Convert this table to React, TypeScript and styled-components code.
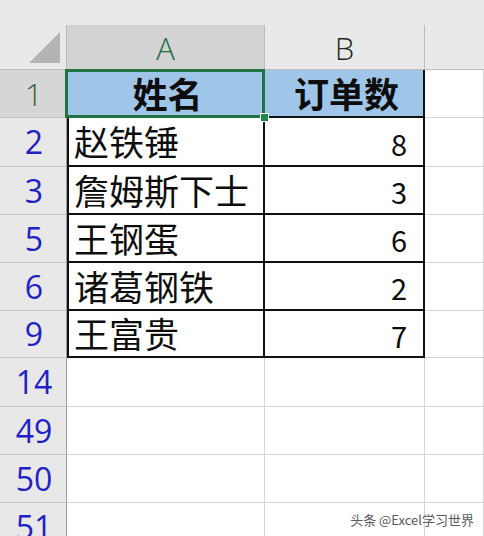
import React from "react";
import styled, { createGlobalStyle } from "styled-components";

const Global = createGlobalStyle`
  html, body { margin: 0; padding: 0; background: #ffffff; }
  * { box-sizing: border-box; }
`;

const FONT = `"Noto Sans CJK SC", "Noto Sans", sans-serif`;

const Sheet = styled.div`
  position: relative;
  width: 484px;
  height: 536px;
  overflow: hidden;
  background: #ffffff;
  font-family: ${FONT};
  display: flex;
  flex-direction: column;
`;

const TopStrip = styled.div`
  height: 25px;
  flex: none;
  background: #e9e9e9;
`;

const Row = styled.div<{ $h: number }>`
  display: grid;
  grid-template-columns: 67px 198px 160px 1fr;
  height: ${(p) => p.$h}px;
  flex: none;
`;

const Corner = styled.div`
  background: #e9e9e9;
  border-right: 1px solid #b9b9b9;
  border-bottom: 1px solid #bdbdbd;
  display: flex;
  align-items: flex-end;
  justify-content: flex-end;
  padding: 0 6px 6px 0;
`;

const ColHead = styled.div<{ $active?: boolean; $last?: boolean }>`
  background: ${(p) => (p.$active ? "#d3d3d3" : "#e9e9e9")};
  border-right: ${(p) => (p.$last ? "none" : "1px solid #bdbdbd")};
  border-bottom: 1px solid #bdbdbd;
  color: ${(p) => (p.$active ? "#1f6b40" : "#262626")};
  font-family: "Open Sans", ${FONT};
  font-size: 31px;
  font-weight: 300;
  line-height: 1;
  display: flex;
  align-items: center;
  justify-content: center;
  padding-top: 2px;
`;

const RowHead = styled.div<{ $active?: boolean }>`
  background: ${(p) => (p.$active ? "#d6d6d6" : "#e8e8e8")};
  border-right: 1px solid #9d9d9d;
  border-bottom: 1px solid #c4c4c4;
  color: ${(p) => (p.$active ? "#3b5a49" : "#2121c8")};
  font-family: "Open Sans", ${FONT};
  font-size: 32px;
  font-weight: ${(p) => (p.$active ? 300 : 400)};
  line-height: 1;
  display: flex;
  align-items: center;
  justify-content: center;
  padding-left: 2px;
`;

const Cell = styled.div<{
  $align?: "left" | "right" | "center";
  $fill?: boolean;
  $bold?: boolean;
  $boxed?: boolean;
  $leftEdge?: boolean;
}>`
  position: relative;
  background: ${(p) => (p.$fill ? "#9fc5e8" : "#ffffff")};
  border-right: ${(p) => (p.$boxed ? "2px solid #111111" : "1px solid #d4d4d4")};
  border-bottom: ${(p) => (p.$boxed ? "2px solid #111111" : "1px solid #d4d4d4")};
  border-left: ${(p) => (p.$leftEdge ? "2px solid #111111" : "none")};
  color: #0d0d0d;
  font-family: ${FONT};
  font-size: ${(p) => (p.$align === "right" ? "29px" : "35px")};
  font-weight: ${(p) => (p.$bold ? 700 : 400)};
  line-height: 1;
  display: flex;
  align-items: center;
  justify-content: ${(p) =>
    p.$align === "right" ? "flex-end" : p.$align === "center" ? "center" : "flex-start"};
  padding: ${(p) => (p.$align === "right" ? "3px 16px 0 0" : "0 0 2px 5px")};
  white-space: nowrap;
`;

const Selection = styled.div`
  position: absolute;
  z-index: 2;
  left: -2px;
  top: -1px;
  right: -2px;
  bottom: -2px;
  border: 3px solid #217346;
  pointer-events: none;
`;

const FillHandle = styled.div`
  position: absolute;
  z-index: 3;
  right: -6px;
  bottom: -6px;
  width: 9px;
  height: 9px;
  background: #1f8a47;
  border: 1px solid #ffffff;
`;

const Watermark = styled.div`
  position: absolute;
  right: 10px;
  bottom: 10px;
  font-family: ${FONT};
  font-size: 13px;
  line-height: 1;
  color: #5a5a5a;
  text-shadow: 0 0 2px #ffffff, 0 0 1px #ffffff;
  white-space: nowrap;
`;

const CornerTriangle = () => (
  <svg width="31" height="31" viewBox="0 0 31 31">
    <polygon points="31,0 31,31 0,31" fill="#b4b4b4" />
  </svg>
);

type DataRow = { num: string; h: number; name?: string; qty?: string };

const rows: DataRow[] = [
  { num: "2", h: 49, name: "赵铁锤", qty: "8" },
  { num: "3", h: 48, name: "詹姆斯下士", qty: "3" },
  { num: "5", h: 48, name: "王钢蛋", qty: "6" },
  { num: "6", h: 48, name: "诸葛钢铁", qty: "2" },
  { num: "9", h: 47, name: "王富贵", qty: "7" },
  { num: "14", h: 49 },
  { num: "49", h: 48 },
  { num: "50", h: 48 },
  { num: "51", h: 48 },
];

export default function App() {
  return (
    <>
      <Global />
      <Sheet>
        <TopStrip />
        <Row $h={45}>
          <Corner>
            <CornerTriangle />
          </Corner>
          <ColHead $active>A</ColHead>
          <ColHead>B</ColHead>
          <ColHead $last />
        </Row>
        <Row $h={48}>
          <RowHead $active>1</RowHead>
          <Cell $fill $bold $align="center" $boxed>
            姓名
            <Selection />
            <FillHandle />
          </Cell>
          <Cell $fill $bold $align="center" $boxed>
            订单数
          </Cell>
          <Cell />
        </Row>
        {rows.map((r) => {
          const boxed = r.name !== undefined;
          return (
            <Row key={r.num} $h={r.h}>
              <RowHead>{r.num}</RowHead>
              <Cell $boxed={boxed} $leftEdge={boxed}>
                {r.name}
              </Cell>
              <Cell $boxed={boxed} $align="right">
                {r.qty}
              </Cell>
              <Cell />
            </Row>
          );
        })}
        <Watermark>头条 @Excel学习世界</Watermark>
      </Sheet>
    </>
  );
}
